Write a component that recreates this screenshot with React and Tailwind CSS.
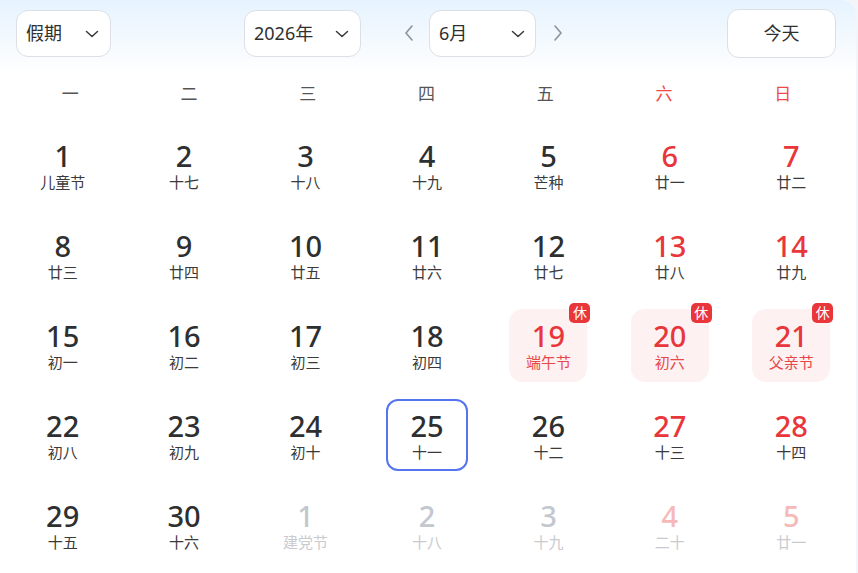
import React from "react";

const FONT = { fontFamily: '"Noto Sans", "Noto Sans CJK SC", sans-serif' };

const rows = [
  [["1","儿童节"],["2","十七"],["3","十八"],["4","十九"],["5","芒种"],["6","廿一"],["7","廿二"]],
  [["8","廿三"],["9","廿四"],["10","廿五"],["11","廿六"],["12","廿七"],["13","廿八"],["14","廿九"]],
  [["15","初一"],["16","初二"],["17","初三"],["18","初四"],["19","端午节","h"],["20","初六","h"],["21","父亲节","h"]],
  [["22","初八"],["23","初九"],["24","初十"],["25","十一","t"],["26","十二"],["27","十三"],["28","十四"]],
  [["29","十五"],["30","十六"],["1","建党节","n"],["2","十八","n"],["3","十九","n"],["4","二十","n"],["5","廿一","n"]],
];

const weekdays = ["一","二","三","四","五","六","日"];

function Chevron() {
  return (
    <svg width="14" height="8" viewBox="0 0 14 8" fill="none">
      <path d="M1.5 1.5 L7 6.5 L12.5 1.5" stroke="#3a3a3a" strokeWidth="1.5" strokeLinecap="round" strokeLinejoin="round" />
    </svg>
  );
}

function Arrow({ dir }) {
  return (
    <svg width="12" height="20" viewBox="0 0 12 20" fill="none">
      <path d={dir === "l" ? "M9 3 L3 10 L9 17" : "M3 3 L9 10 L3 17"} stroke="#8d929b" strokeWidth="1.6" strokeLinecap="round" strokeLinejoin="round" />
    </svg>
  );
}

function Select({ label, w, pr }) {
  return (
    <div className={`h-[47px] ${w} bg-white border border-[#dcdfe5] rounded-[12px] flex items-center justify-between pl-[9px] ${pr} text-[18px] text-[#2f2f2f]`}>
      <span>{label}</span>
      <Chevron />
    </div>
  );
}

function Cell({ d, col }) {
  const [num, lunar, kind] = d;
  const weekend = col >= 5;
  let numColor = weekend ? "text-[#e8363a]" : "text-[#2e2f31]";
  let lunarColor = "text-[#3a3a3a]";
  let box = "w-[78px] h-[73px]";
  if (kind === "h") {
    numColor = "text-[#e8363a]";
    lunarColor = "text-[#e8474a]";
    box = "w-[78px] h-[73px] bg-[#fdf1f1] rounded-[14px]";
  } else if (kind === "t") {
    box = "w-[82px] h-[72px] border-2 border-[#5574f0] rounded-[12px]";
  } else if (kind === "n") {
    numColor = weekend ? "text-[#f6b9b9]" : "text-[#c3c7ce]";
    lunarColor = "text-[#c9cbcf]";
  }
  return (
    <div className="h-[90px] pt-[17px] flex justify-center">
      <div className={`relative flex flex-col items-center ${box} ${kind === "t" ? "pt-[9px]" : "pt-[11px]"}`}>
        <div className={`text-[29px] leading-[32px] font-medium ${numColor}`}>{num}</div>
        <div className={`text-[15px] leading-[20px] ${lunarColor}`}>{lunar}</div>
        {kind === "h" && (
          <div className="absolute -top-[6px] -right-[3px] w-[21px] h-[20px] rounded-[5px] bg-[#e8363a] text-white text-[14px] leading-[20px] text-center">休</div>
        )}
      </div>
    </div>
  );
}

export default function App() {
  return (
    <div className="w-[858px] h-[573px] bg-[#f4f5fa] overflow-hidden" style={FONT}>
      <div className="w-[856px] h-[573px] bg-white rounded-tr-[14px] overflow-hidden">
        <div className="h-[76px] bg-gradient-to-b from-[#e6f3fe] via-[#f3f9fe] to-white pt-[10px] flex items-start">
          <div className="ml-[16px]">
            <Select label="假期" w="w-[95px]" pr="pr-[11px]" />
          </div>
          <div className="ml-[133px]">
            <Select label="2026年" w="w-[117px]" pr="pr-[11px]" />
          </div>
          <div className="ml-[42px] mt-[13px]"><Arrow dir="l" /></div>
          <div className="ml-[14px]">
            <Select label="6月" w="w-[107px]" pr="pr-[10px]" />
          </div>
          <div className="ml-[16px] mt-[13px]"><Arrow dir="r" /></div>
          <div className="ml-[163px] -mt-[1px] h-[49px] w-[109px] bg-white border border-[#dcdfe5] rounded-[12px] flex items-center justify-center text-[18px] text-[#2f2f2f]">
            今天
          </div>
        </div>
        <div className="ml-[11px] w-[831px] grid grid-cols-7 h-[36px] items-center">
          {weekdays.map((w, i) => (
            <div key={i} className={`text-center text-[17px] ${i >= 5 ? "text-[#f04848]" : "text-[#555555]"}`}>{w}</div>
          ))}
        </div>
        <div className="ml-[2px] w-[850px] grid grid-cols-7">
          {rows.map((r, ri) => r.map((d, ci) => <Cell key={ri + "-" + ci} d={d} col={ci} />))}
        </div>
      </div>
    </div>
  );
}
